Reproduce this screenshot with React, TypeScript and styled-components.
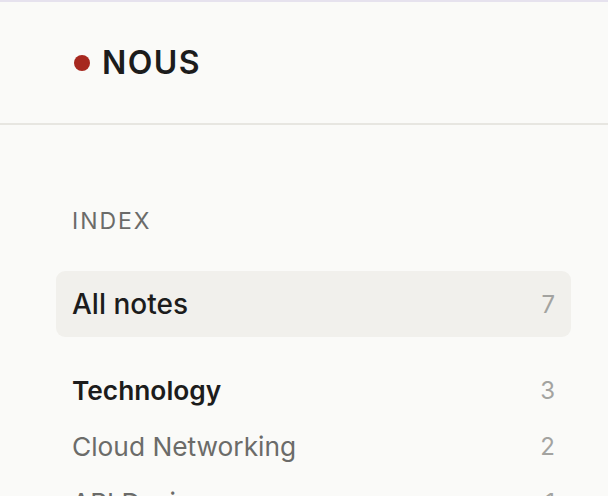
import React from 'react';
import styled, { createGlobalStyle } from 'styled-components';

const GlobalStyle = createGlobalStyle`
  html, body {
    margin: 0;
    padding: 0;
    background: #fafaf8;
  }
  body {
    font-family: Inter, 'Noto Sans', 'Liberation Sans', sans-serif;
    -webkit-font-smoothing: antialiased;
  }
`;

type Topic = { name: string; count: number; group?: boolean };

const topics: Topic[] = [
  { name: 'Technology', count: 3, group: true },
  { name: 'Cloud Networking', count: 2 },
  { name: 'API Design', count: 1 },
];

function App() {
  return (
    <>
      <GlobalStyle />
      <Sidebar>
        <Header>
          <Brand>
            <Dot />
            NOUS
          </Brand>
        </Header>
        <Nav>
          <SectionLabel>INDEX</SectionLabel>
          <Item $active>
            <ItemName>All notes</ItemName>
            <Count>7</Count>
          </Item>
          <Topics>
            {topics.map((t) => (
              <Item key={t.name} $group={t.group}>
                <ItemName>{t.name}</ItemName>
                <Count>{t.count}</Count>
              </Item>
            ))}
          </Topics>
        </Nav>
      </Sidebar>
    </>
  );
}

export default App;

const Sidebar = styled.div`
  width: 608px;
  height: 496px;
  overflow: hidden;
  border-top: 2px solid #e6e2ee;
  box-sizing: border-box;
  background: #fafaf8;
`;

const Header = styled.div`
  height: 121px;
  border-bottom: 2px solid #e7e6e1;
  display: flex;
  align-items: center;
  padding: 0 0 0 74px;
`;

const Brand = styled.div`
  display: flex;
  align-items: center;
  gap: 12px;
  font-size: 32px;
  font-weight: 600;
  letter-spacing: 0.045em;
  color: #1c1c1c;
`;

const Dot = styled.span`
  width: 16px;
  height: 16px;
  border-radius: 50%;
  background: #a7281f;
`;

const Nav = styled.div`
  padding: 81px 37px 0 56px;
  display: flex;
  flex-direction: column;
`;

const SectionLabel = styled.div`
  padding-left: 16px;
  font-size: 23px;
  font-weight: 400;
  letter-spacing: 0.085em;
  color: #6b6b69;
  line-height: 30px;
  margin-bottom: 35px;
`;

const Topics = styled.div`
  display: flex;
  flex-direction: column;
  margin-top: 25px;
`;

const Item = styled.div<{ $active?: boolean; $group?: boolean }>`
  display: flex;
  align-items: center;
  justify-content: space-between;
  height: ${(p) => (p.$active ? '66px' : '56px')};
  padding: 0 16px;
  border-radius: 9px;
  background: ${(p) => (p.$active ? '#f1f0ec' : 'transparent')};
  font-size: ${(p) => (p.$active ? '28px' : '26.3px')};
  font-weight: ${(p) => (p.$group ? 600 : p.$active ? 500 : 400)};
  color: ${(p) => (p.$active || p.$group ? '#1c1c1c' : '#6b6b69')};
`;

const ItemName = styled.span``;

const Count = styled.span`
  font-size: 24px;
  font-weight: 400;
  color: #a3a3a0;
`;
